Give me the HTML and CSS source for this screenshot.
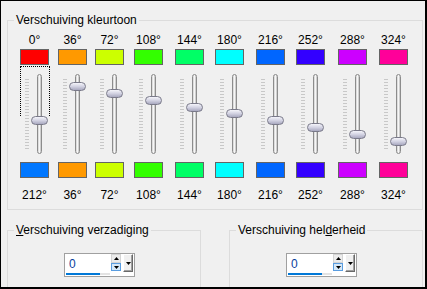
FILE: index.html
```html
<!DOCTYPE html>
<html lang="nl">
<head>
    <meta charset="UTF-8">
    <title>Verschuiving kleurtoon</title>
    <link rel="stylesheet" href="styles.css">
</head>
<body>
    <div class="dialog">
        <fieldset class="group group-hue">
            <legend>Verschuiving kleurtoon</legend>
            <div class="hues">
                <div class="hue">
                    <div class="deg deg-top">0°</div>
                    <div class="swatch" style="background: hsl(0, 100%, 50%)"></div>
                    <div class="slider">
                        <div class="ticks"></div>
                        <div class="track"><div class="thumb" style="top: 41px"></div></div>
                        <div class="focus"></div>
                    </div>
                    <div class="swatch" style="background: hsl(212, 100%, 50%)"></div>
                    <div class="deg deg-bottom">212°</div>
                </div>
                <div class="hue">
                    <div class="deg deg-top">36°</div>
                    <div class="swatch" style="background: hsl(36, 100%, 50%)"></div>
                    <div class="slider">
                        <div class="ticks"></div>
                        <div class="track"><div class="thumb" style="top: 7px"></div></div>
                    </div>
                    <div class="swatch" style="background: hsl(36, 100%, 50%)"></div>
                    <div class="deg deg-bottom">36°</div>
                </div>
                <div class="hue">
                    <div class="deg deg-top">72°</div>
                    <div class="swatch" style="background: hsl(72, 100%, 50%)"></div>
                    <div class="slider">
                        <div class="ticks"></div>
                        <div class="track"><div class="thumb" style="top: 14px"></div></div>
                    </div>
                    <div class="swatch" style="background: hsl(72, 100%, 50%)"></div>
                    <div class="deg deg-bottom">72°</div>
                </div>
                <div class="hue">
                    <div class="deg deg-top">108°</div>
                    <div class="swatch" style="background: hsl(108, 100%, 50%)"></div>
                    <div class="slider">
                        <div class="ticks"></div>
                        <div class="track"><div class="thumb" style="top: 21px"></div></div>
                    </div>
                    <div class="swatch" style="background: hsl(108, 100%, 50%)"></div>
                    <div class="deg deg-bottom">108°</div>
                </div>
                <div class="hue">
                    <div class="deg deg-top">144°</div>
                    <div class="swatch" style="background: hsl(144, 100%, 50%)"></div>
                    <div class="slider">
                        <div class="ticks"></div>
                        <div class="track"><div class="thumb" style="top: 28px"></div></div>
                    </div>
                    <div class="swatch" style="background: hsl(144, 100%, 50%)"></div>
                    <div class="deg deg-bottom">144°</div>
                </div>
                <div class="hue">
                    <div class="deg deg-top">180°</div>
                    <div class="swatch" style="background: hsl(180, 100%, 50%)"></div>
                    <div class="slider">
                        <div class="ticks"></div>
                        <div class="track"><div class="thumb" style="top: 34px"></div></div>
                    </div>
                    <div class="swatch" style="background: hsl(180, 100%, 50%)"></div>
                    <div class="deg deg-bottom">180°</div>
                </div>
                <div class="hue">
                    <div class="deg deg-top">216°</div>
                    <div class="swatch" style="background: hsl(216, 100%, 50%)"></div>
                    <div class="slider">
                        <div class="ticks"></div>
                        <div class="track"><div class="thumb" style="top: 41px"></div></div>
                    </div>
                    <div class="swatch" style="background: hsl(216, 100%, 50%)"></div>
                    <div class="deg deg-bottom">216°</div>
                </div>
                <div class="hue">
                    <div class="deg deg-top">252°</div>
                    <div class="swatch" style="background: hsl(252, 100%, 50%)"></div>
                    <div class="slider">
                        <div class="ticks"></div>
                        <div class="track"><div class="thumb" style="top: 48px"></div></div>
                    </div>
                    <div class="swatch" style="background: hsl(252, 100%, 50%)"></div>
                    <div class="deg deg-bottom">252°</div>
                </div>
                <div class="hue">
                    <div class="deg deg-top">288°</div>
                    <div class="swatch" style="background: hsl(288, 100%, 50%)"></div>
                    <div class="slider">
                        <div class="ticks"></div>
                        <div class="track"><div class="thumb" style="top: 55px"></div></div>
                    </div>
                    <div class="swatch" style="background: hsl(288, 100%, 50%)"></div>
                    <div class="deg deg-bottom">288°</div>
                </div>
                <div class="hue">
                    <div class="deg deg-top">324°</div>
                    <div class="swatch" style="background: hsl(324, 100%, 50%)"></div>
                    <div class="slider">
                        <div class="ticks"></div>
                        <div class="track"><div class="thumb" style="top: 62px"></div></div>
                    </div>
                    <div class="swatch" style="background: hsl(324, 100%, 50%)"></div>
                    <div class="deg deg-bottom">324°</div>
                </div>
            </div>
        </fieldset>

        <div class="groups">
            <fieldset class="group group-small">
                <legend><u>V</u>erschuiving verzadiging</legend>
                <div class="spin">
                    <div class="spin-field">
                        <div class="spin-value">0</div>
                        <div class="spin-bar"></div>
                    </div>
                    <div class="spin-arrows">
                        <div class="spin-up"><svg width="5" height="3" viewBox="0 0 5 3"><path d="M0 3h5L2.5 0z"/></svg></div>
                        <div class="spin-down"><svg width="5" height="3" viewBox="0 0 5 3"><path d="M0 0h5L2.5 3z"/></svg></div>
                    </div>
                    <div class="spin-drop"><svg width="5" height="3" viewBox="0 0 5 3"><path d="M0 0h5L2.5 3z"/></svg></div>
                </div>
            </fieldset>
            <fieldset class="group group-small">
                <legend>Verschuiving hel<u>d</u>erheid</legend>
                <div class="spin">
                    <div class="spin-field">
                        <div class="spin-value">0</div>
                        <div class="spin-bar"></div>
                    </div>
                    <div class="spin-arrows">
                        <div class="spin-up"><svg width="5" height="3" viewBox="0 0 5 3"><path d="M0 3h5L2.5 0z"/></svg></div>
                        <div class="spin-down"><svg width="5" height="3" viewBox="0 0 5 3"><path d="M0 0h5L2.5 3z"/></svg></div>
                    </div>
                    <div class="spin-drop"><svg width="5" height="3" viewBox="0 0 5 3"><path d="M0 0h5L2.5 3z"/></svg></div>
                </div>
            </fieldset>
        </div>
    </div>
</body>
</html>
```

FILE: styles.css
```css
* {
    margin: 0;
    padding: 0;
    box-sizing: border-box;
}

body {
    background: #f0f0f0;
    font-family: 'Liberation Sans', Arial, sans-serif;
    font-size: 12px;
    line-height: 14px;
    color: #000;
}

.dialog {
    width: 427px;
    height: 289px;
    border-style: solid;
    border-color: #000;
    border-width: 1px 2px 2px 1px;
    background: #f0f0f0;
    overflow: hidden;
}

.group {
    border: 1px solid #dcdcdc;
    min-width: 0;
}

.group legend {
    margin-left: 6px;
    padding: 0 2px;
    line-height: 14px;
}

.group-hue {
    width: 416px;
    margin: 12px 0 0 6px;
}

/* hue columns */
.hues {
    display: grid;
    grid-template-columns: 38px 37px 39px 41px 40px 41px 40px 42px 41px 29px;
    padding: 6px 0 7px 12px;
}

.hue {
    display: flex;
    flex-direction: column;
    width: 29px;
}

.deg {
    height: 14px;
    margin: 0 -6px;
    text-align: center;
    white-space: nowrap;
}

.deg-top {
    margin-bottom: 2px;
}

.deg-bottom {
    margin-top: 10px;
}

.swatch {
    height: 16px;
    border: 1px solid #646464;
}

.slider {
    position: relative;
    display: flex;
    height: 97px;
}

.ticks {
    width: 4px;
    height: 70px;
    margin: 14px 0 0 5px;
    background: repeating-linear-gradient(to bottom, #c8c8c8 0 1px, transparent 1px 3px);
}

.track {
    position: relative;
    width: 5px;
    height: 80px;
    margin: 9px 0 0 8px;
    border: 1px solid #8c8c8c;
    border-radius: 3px;
    background: linear-gradient(to right, #d2d2d2, #f6f6f6 50%, #bdbdbd);
}

.thumb {
    position: absolute;
    left: -7px;
    width: 17px;
    height: 9px;
    border: 1px solid #7a7a8a;
    border-radius: 5px;
    background: linear-gradient(#f4f4fa, #d2d2e2 50%, #a9a9c0);
}

.focus {
    position: absolute;
    left: 0;
    top: 1px;
    width: 30px;
    height: 50px;
    border: 1px dotted #000;
    border-bottom: 0;
}

/* bottom groups */
.groups {
    display: flex;
    gap: 28px;
    margin: 13px 0 0 6px;
}

.group-small {
    width: 194px;
    padding-bottom: 20px;
}

.spin {
    display: flex;
    width: 71px;
    height: 24px;
    margin: 16px 0 0 56px;
    border: 1px solid #a0a0a0;
    background: #fff;
}

.spin-field {
    width: 45px;
    padding-top: 3px;
}

.spin-value {
    padding-left: 4px;
    color: #0a3f9c;
}

.spin-bar {
    width: 44px;
    height: 2px;
    margin: 2px 0 0 1px;
    background: linear-gradient(to right, #0078d7 34px, #e3e3e3 34px);
}

.spin-arrows {
    display: flex;
    flex-direction: column;
    width: 10px;
    margin-left: 1px;
}

.spin-up,
.spin-down,
.spin-drop {
    display: flex;
    justify-content: center;
    align-items: center;
}

.spin-up {
    height: 9px;
    background: #ececec;
    border: 1px solid #d4d4d4;
}

.spin-down {
    height: 8px;
    background: #d5e8f8;
    border: 1px solid #5a9de0;
}

.spin-drop {
    width: 10px;
    height: 18px;
    margin-left: 2px;
    background: #f0f0f0;
    border: 1px solid;
    border-color: #fff #696969 #696969 #fff;
    box-shadow: inset -1px -1px #a0a0a0;
}
```
